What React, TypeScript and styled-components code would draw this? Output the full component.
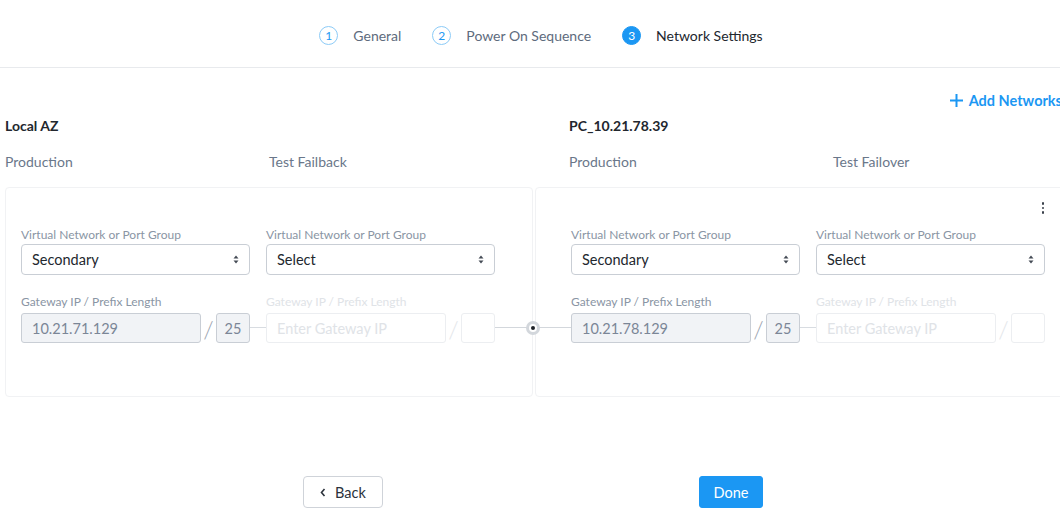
import React from 'react'
import styled, { createGlobalStyle } from 'styled-components'

const GlobalStyle = createGlobalStyle`
  html, body {
    margin: 0;
    padding: 0;
    background: #ffffff;
    overflow: hidden;
  }
  body {
    font-family: Lato, "Open Sans", "Liberation Sans", sans-serif;
    color: #22272e;
  }
`

const BLUE = '#1b97f3'

const Page = styled.div`
  width: 1066px;
  height: 524px;
  display: flex;
  flex-direction: column;
`

const Header = styled.div`
  height: 68px;
  box-sizing: border-box;
  border-bottom: 1px solid #e8eaed;
  display: flex;
  align-items: center;
  justify-content: center;
  padding: 3px 0 0 16px;
`

const Step = styled.div`
  display: flex;
  align-items: center;
  gap: 15px;
  margin-right: 31px;
  &:last-child {
    margin-right: 0;
  }
`

const StepCircle = styled.div<{ $active?: boolean }>`
  width: 19px;
  height: 19px;
  box-sizing: border-box;
  border-radius: 50%;
  border: 1px solid ${(p) => (p.$active ? BLUE : '#8ccbf7')};
  background: ${(p) => (p.$active ? BLUE : '#ffffff')};
  color: ${(p) => (p.$active ? '#ffffff' : BLUE)};
  font-size: 12px;
  display: flex;
  align-items: center;
  justify-content: center;
`

const StepLabel = styled.span<{ $active?: boolean }>`
  font-size: 14px;
  color: ${(p) => (p.$active ? '#22272e' : '#5e6b7d')};
`

const ActionBar = styled.div`
  height: 20px;
  margin-top: 22px;
  display: flex;
  justify-content: flex-end;
  padding-right: 4px;
`

const AddLink = styled.a`
  display: flex;
  align-items: center;
  gap: 6px;
  color: ${BLUE};
  font-size: 14.5px;
  font-weight: 700;
  cursor: pointer;
`

const HeadGrid = styled.div`
  display: grid;
  grid-template-columns: 264px 300px 264px 1fr;
  padding-left: 5px;
`

const SiteName = styled.div<{ $col: number }>`
  grid-column: ${(p) => p.$col} / span 2;
  grid-row: 1;
  font-size: 14px;
  font-weight: 700;
  line-height: 20px;
  margin-top: 6px;
  color: #22272e;
`

const ColHead = styled.div<{ $col: number }>`
  grid-column: ${(p) => p.$col};
  grid-row: 2;
  font-size: 14px;
  line-height: 20px;
  margin-top: 16px;
  color: #6a778a;
`

const CardsRow = styled.div`
  position: relative;
  display: flex;
  gap: 2px;
  margin-top: 15px;
  padding-left: 5px;
`

const Card = styled.div<{ $left: number; $right: number; $width: number }>`
  width: ${(p) => p.$width}px;
  box-sizing: border-box;
  height: 210px;
  border: 1px solid #f1f2f4;
  border-radius: 4px;
  padding: 0 ${(p) => p.$right}px 0 ${(p) => p.$left}px;
`

const CardTop = styled.div`
  height: 40px;
  display: flex;
  align-items: center;
  justify-content: flex-end;
  margin-right: -1px;
`

const Kebab = styled.div`
  display: flex;
  flex-direction: column;
  gap: 2px;
  padding: 2px;
  cursor: pointer;
  span {
    width: 2.5px;
    height: 2.5px;
    background: #3a414b;
    border-radius: 50%;
  }
`

const FieldsGrid = styled.div`
  display: grid;
  grid-template-columns: 229px 229px;
  column-gap: 16px;
`

const Field = styled.div`
  display: flex;
  flex-direction: column;
`

const Label = styled.label<{ $faded?: boolean }>`
  font-size: 12px;
  line-height: 14px;
  color: ${(p) => (p.$faded ? '#e0e3e7' : '#8a95a4')};
  margin-bottom: 2px;
  white-space: nowrap;
`

const SelectBox = styled.div`
  height: 31px;
  box-sizing: border-box;
  border: 1px solid #c9ced5;
  border-radius: 4px;
  display: flex;
  align-items: center;
  justify-content: space-between;
  padding: 0 10px;
  font-size: 14.5px;
  color: #22272e;
`

const GatewayLabel = styled(Label)`
  margin-top: 20px;
  margin-bottom: 4px;
`

const GatewayRow = styled.div`
  display: flex;
  align-items: center;
`

const IpInput = styled.div<{ $faded?: boolean }>`
  width: 180px;
  height: 30px;
  box-sizing: border-box;
  border: 1px solid ${(p) => (p.$faded ? '#eceef1' : '#c9ced5')};
  background: ${(p) => (p.$faded ? '#ffffff' : '#f1f3f6')};
  border-radius: 3px;
  display: flex;
  align-items: center;
  padding: 0 10px;
  font-size: 14.5px;
  color: ${(p) => (p.$faded ? '#e0e3e7' : '#7b8696')};
`

const Slash = styled.span<{ $faded?: boolean }>`
  width: 15px;
  text-align: center;
  font-size: 24px;
  font-weight: 300;
  color: ${(p) => (p.$faded ? '#e3e6ea' : '#9aa3af')};
`

const PrefixInput = styled(IpInput)`
  width: 34px;
  padding: 0;
  justify-content: center;
`

const LinkLayer = styled.div`
  position: relative;
  grid-column: 1 / span 2;
  grid-row: 1;
  pointer-events: none;
`

const Link = styled.div`
  position: absolute;
  left: 229px;
  top: 99px;
  width: 16px;
  border-top: 1px solid #d8dce1;
`

const Connector = styled.div`
  position: absolute;
  left: 495px;
  top: 133px;
  width: 76px;
  height: 15px;
  display: flex;
  align-items: center;
  justify-content: center;
  &::before {
    content: '';
    position: absolute;
    left: 0;
    right: 0;
    top: 7px;
    border-top: 1.5px solid #d3d7dc;
  }
`

const Node = styled.div`
  position: relative;
  width: 14px;
  height: 14px;
  border-radius: 50%;
  background: #d3d7dc;
  display: flex;
  align-items: center;
  justify-content: center;
  &::after {
    content: '';
    width: 8px;
    height: 8px;
    box-sizing: border-box;
    border: 2.5px solid #ffffff;
    background: #1d2127;
    border-radius: 50%;
  }
`

const Footer = styled.div`
  margin-top: 79px;
  display: flex;
  justify-content: center;
  gap: 316px;
`

const Button = styled.button<{ $primary?: boolean }>`
  height: 32px;
  box-sizing: border-box;
  border-radius: ${(p) => (p.$primary ? 3 : 4)}px;
  border: 1px solid ${(p) => (p.$primary ? BLUE : '#cfd3d9')};
  background: ${(p) => (p.$primary ? BLUE : '#ffffff')};
  color: ${(p) => (p.$primary ? '#ffffff' : '#2b323b')};
  font-family: inherit;
  font-size: 14.5px;
  display: flex;
  align-items: center;
  justify-content: center;
  gap: 9px;
  width: ${(p) => (p.$primary ? 64 : 80)}px;
  padding: 0;
  cursor: pointer;
`

const Arrows = () => (
  <svg width="6" height="9" viewBox="0 0 6 9">
    <path d="M3 0.5 L5.5 3.5 H0.5 Z" fill="#444b55" />
    <path d="M3 8.5 L5.5 5.5 H0.5 Z" fill="#444b55" />
  </svg>
)

interface Mapping {
  network: string
  ip?: string
  prefix?: string
}

const Column: React.FC<Mapping> = ({ network, ip, prefix }) => (
  <Field>
    <Label>Virtual Network or Port Group</Label>
    <SelectBox>
      {network}
      <Arrows />
    </SelectBox>
    <GatewayLabel $faded={!ip}>Gateway IP / Prefix Length</GatewayLabel>
    <GatewayRow>
      <IpInput $faded={!ip}>{ip || 'Enter Gateway IP'}</IpInput>
      <Slash $faded={!ip}>/</Slash>
      <PrefixInput $faded={!ip}>{prefix}</PrefixInput>
    </GatewayRow>
  </Field>
)

const SiteFields: React.FC<{ prod: Mapping; test: Mapping }> = ({ prod, test }) => (
  <FieldsGrid>
    <Column {...prod} />
    <Column {...test} />
    <LinkLayer>
      <Link />
    </LinkLayer>
  </FieldsGrid>
)

const App: React.FC = () => {
  return (
    <Page>
      <GlobalStyle />
      <Header>
        <Step>
          <StepCircle>1</StepCircle>
          <StepLabel>General</StepLabel>
        </Step>
        <Step>
          <StepCircle>2</StepCircle>
          <StepLabel>Power On Sequence</StepLabel>
        </Step>
        <Step>
          <StepCircle $active>3</StepCircle>
          <StepLabel $active>Network Settings</StepLabel>
        </Step>
      </Header>

      <ActionBar>
        <AddLink>
          <svg width="13" height="13" viewBox="0 0 13 13">
            <path d="M6.5 0 V13 M0 6.5 H13" stroke={BLUE} strokeWidth="2" />
          </svg>
          Add Networks
        </AddLink>
      </ActionBar>

      <HeadGrid>
        <SiteName $col={1}>Local AZ</SiteName>
        <SiteName $col={3}>PC_10.21.78.39</SiteName>
        <ColHead $col={1}>Production</ColHead>
        <ColHead $col={2}>Test Failback</ColHead>
        <ColHead $col={3}>Production</ColHead>
        <ColHead $col={4}>Test Failover</ColHead>
      </HeadGrid>

      <CardsRow>
        <Card $width={528} $left={15} $right={37}>
          <CardTop />
          <SiteFields
            prod={{ network: 'Secondary', ip: '10.21.71.129', prefix: '25' }}
            test={{ network: 'Select' }}
          />
        </Card>
        <Card $width={531} $left={35} $right={20}>
          <CardTop>
            <Kebab>
              <span />
              <span />
              <span />
            </Kebab>
          </CardTop>
          <SiteFields
            prod={{ network: 'Secondary', ip: '10.21.78.129', prefix: '25' }}
            test={{ network: 'Select' }}
          />
        </Card>
        <Connector>
          <Node />
        </Connector>
      </CardsRow>

      <Footer>
        <Button>
          <svg width="6" height="9" viewBox="0 0 6 9">
            <path d="M4.5 1 L1.5 4.5 L4.5 8" stroke="#2b323b" strokeWidth="1.6" fill="none" />
          </svg>
          Back
        </Button>
        <Button $primary>Done</Button>
      </Footer>
    </Page>
  )
}

export default App
